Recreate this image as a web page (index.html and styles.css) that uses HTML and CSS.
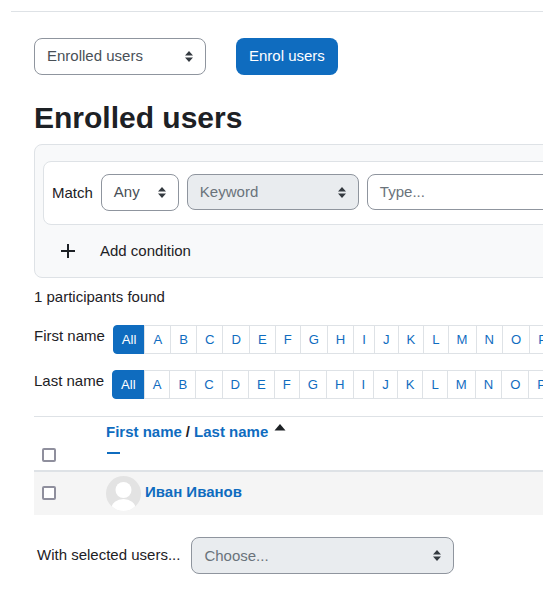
FILE: index.html
```html
<!DOCTYPE html>
<html lang="en">
<head>
<meta charset="utf-8">
<title>Enrolled users</title>
<link rel="stylesheet" href="styles.css">
</head>
<body>
<div class="page">
  <div class="tertiary">
    <div class="select w-enrolled">Enrolled users<svg class="caret" viewBox="0 0 8 11"><path d="M4 0l4 4.500H0zM4 11L0 6.500h8z"/></svg></div>
    <a class="btn">Enrol users</a>
  </div>
  <h1>Enrolled users</h1>
  <section class="filters">
    <div class="filter-row">
      <span class="match">Match</span>
      <div class="select w-any">Any<svg class="caret" viewBox="0 0 8 11"><path d="M4 0l4 4.500H0zM4 11L0 6.500h8z"/></svg></div>
      <div class="select w-keyword disabled">Keyword<svg class="caret" viewBox="0 0 8 11"><path d="M4 0l4 4.500H0zM4 11L0 6.500h8z"/></svg></div>
      <div class="input">Type...</div>
    </div>
    <div class="add">
      <svg class="plus" viewBox="0 0 14 14"><path d="M7 0v14M0 7h14"/></svg>
      <span>Add condition</span>
    </div>
  </section>
  <p class="count">1 participants found</p>
  <div class="initials first">
    <span class="ilabel">First name</span>
    <ul class="pager">
      <li class="active">All</li><li>A</li><li>B</li><li>C</li><li>D</li><li>E</li><li>F</li><li>G</li><li>H</li><li>I</li><li>J</li><li>K</li><li>L</li><li>M</li><li>N</li><li>O</li><li>P</li>
    </ul>
  </div>
  <div class="initials last">
    <span class="ilabel">Last name</span>
    <ul class="pager">
      <li class="active">All</li><li>A</li><li>B</li><li>C</li><li>D</li><li>E</li><li>F</li><li>G</li><li>H</li><li>I</li><li>J</li><li>K</li><li>L</li><li>M</li><li>N</li><li>O</li><li>P</li>
    </ul>
  </div>
  <div class="table">
    <div class="thead">
      <div class="cell-check"><span class="check"></span></div>
      <div class="head-name">
        <div class="head-links"><a>First name</a> <b>/</b> <a>Last name</a><svg class="sort" viewBox="0 0 12 7"><path d="M6 0l5.500 6.500H.5z"/></svg></div>
        <span class="dash"></span>
      </div>
    </div>
    <div class="trow">
      <div class="cell-check"><span class="check"></span></div>
      <svg class="avatar" viewBox="0 0 35 35"><defs><clipPath id="av"><circle cx="17.500" cy="17.500" r="17.500"/></clipPath></defs><circle cx="17.500" cy="17.500" r="17.500" fill="#e3e3e3"/><g clip-path="url(#av)" fill="#fff"><circle cx="17.500" cy="14" r="8"/><ellipse cx="17.500" cy="32" rx="12" ry="9"/></g></svg>
      <a class="uname">Иван Иванов</a>
    </div>
  </div>
  <div class="bulk">
    <span>With selected users...</span>
    <div class="select w-choose disabled">Choose...<svg class="caret" viewBox="0 0 8 11"><path d="M4 0l4 4.500H0zM4 11L0 6.500h8z"/></svg></div>
  </div>
</div>
</body>
</html>
```
FILE: styles.css
```css
html, body {
  margin: 0;
  height: 100%;
  overflow: hidden;
  background: #fff;
}
body {
  font-family: "Liberation Sans", Arial, sans-serif;
  font-size: 15px;
  line-height: 22.5px;
  color: #1d2125;
}
.page {
  margin-left: 11px;
  margin-top: 11px;
  border-top: 1px solid #dee2e6;
  padding-left: 23px;
  width: 700px;
}
.tertiary {
  display: flex;
  gap: 30px;
  padding-top: 26px;
}
.select, .input {
  box-sizing: border-box;
  display: flex;
  flex: none;
  align-items: center;
  height: 37px;
  padding-left: 12px;
  border: 1px solid #8f959e;
  border-radius: 8px;
  background: #fff;
  color: #495057;
  position: relative;
}
.caret {
  position: absolute;
  right: 12px;
  top: 50%;
  width: 8px;
  height: 11px;
  margin-top: -5.500px;
  fill: #343a40;
}
.w-enrolled { width: 172px; }
.btn {
  box-sizing: border-box;
  display: flex;
  align-items: center;
  height: 37px;
  padding: 0 13px;
  border-radius: 8px;
  background: #0f6cbf;
  color: #fff;
}
h1 {
  margin: 26px 0 0;
  font-size: 30px;
  line-height: 34px;
  font-weight: 700;
  color: #1d2125;
}
.filters {
  box-sizing: border-box;
  margin-top: 9px;
  height: 134px;
  width: 600px;
  padding: 16px 8px 0;
  background: #f8f9fa;
  border: 1px solid #dee2e6;
  border-radius: 8px;
}
.filter-row {
  box-sizing: border-box;
  display: flex;
  align-items: flex-start;
  gap: 8px;
  height: 64px;
  padding: 12px 8px 0;
  background: #fff;
  border: 1px solid #dee2e6;
  border-radius: 8px;
}
.match {
  line-height: 37px;
}
.w-any { width: 78px; }
.w-keyword { width: 172px; height: 36px; }
.disabled {
  background: #e9ecef;
  color: #6a737b;
}
.input {
  width: 300px;
  height: 36px;
  color: #6a737b;
}
.add {
  display: flex;
  align-items: center;
  margin-top: 14px;
  padding-left: 18px;
  height: 24px;
}
.plus {
  width: 14px;
  height: 14px;
  fill: none;
  stroke: #1d2125;
  stroke-width: 2;
}
.add span {
  margin-left: 25px;
}
.count {
  margin: 8px 0 0;
}
.initials {
  display: flex;
  align-items: flex-start;
  gap: 8px;
}
.first { margin-top: 16px; }
.last { margin-top: 16px; }
.pager {
  display: flex;
  margin: 0;
  padding: 0;
  list-style: none;
  font-size: 13.125px;
  line-height: 27px;
}
.pager li {
  box-sizing: content-box;
  padding: 0 8px;
  margin-left: -1px;
  border: 1px solid #dee2e6;
  color: #0f6cbf;
  background: #fff;
}
.pager li.active {
  margin-left: 0;
  background: #0f6cbf;
  border-color: #0f6cbf;
  color: #fff;
  border-radius: 4px 0 0 4px;
}
.table {
  width: 700px;
  margin-top: 17px;
  border-top: 1px solid #dee2e6;
}
.thead {
  display: flex;
  height: 53px;
  border-bottom: 2px solid #dee2e6;
}
.cell-check {
  width: 72px;
  padding-left: 8px;
  box-sizing: border-box;
  flex: none;
}
.thead .cell-check {
  padding-top: 31px;
}
.check {
  display: block;
  box-sizing: border-box;
  width: 14px;
  height: 14px;
  border: 2px solid #8f8f9d;
  border-radius: 2px;
  background: #fff;
}
.head-name {
  padding-top: 4px;
  font-weight: 700;
}
.head-links {
  color: #1d2125;
  display: flex;
  gap: 4px;
  white-space: pre;
}
.head-links a { color: #0f6cbf; }
.sort {
  width: 12px;
  height: 7px;
  fill: #1d2125;
  margin: 3px 0 0 2px;
}
.dash {
  display: block;
  width: 13px;
  height: 2px;
  margin: 9px 0 0 1px;
  background: #0f6cbf;
}
.trow {
  display: flex;
  align-items: center;
  height: 43px;
  background: #f5f5f5;
}
.avatar {
  width: 35px;
  height: 35px;
  flex: none;
  margin-top: 1px;
}
.uname {
  margin-left: 4px;
  padding-bottom: 2px;
  font-weight: 700;
  color: #0f6cbf;
}
.bulk {
  display: flex;
  align-items: center;
  gap: 11px;
  margin-top: 22px;
  padding-left: 3px;
}
.w-choose {
  width: 263px;
  padding-top: 2px;
}
```
